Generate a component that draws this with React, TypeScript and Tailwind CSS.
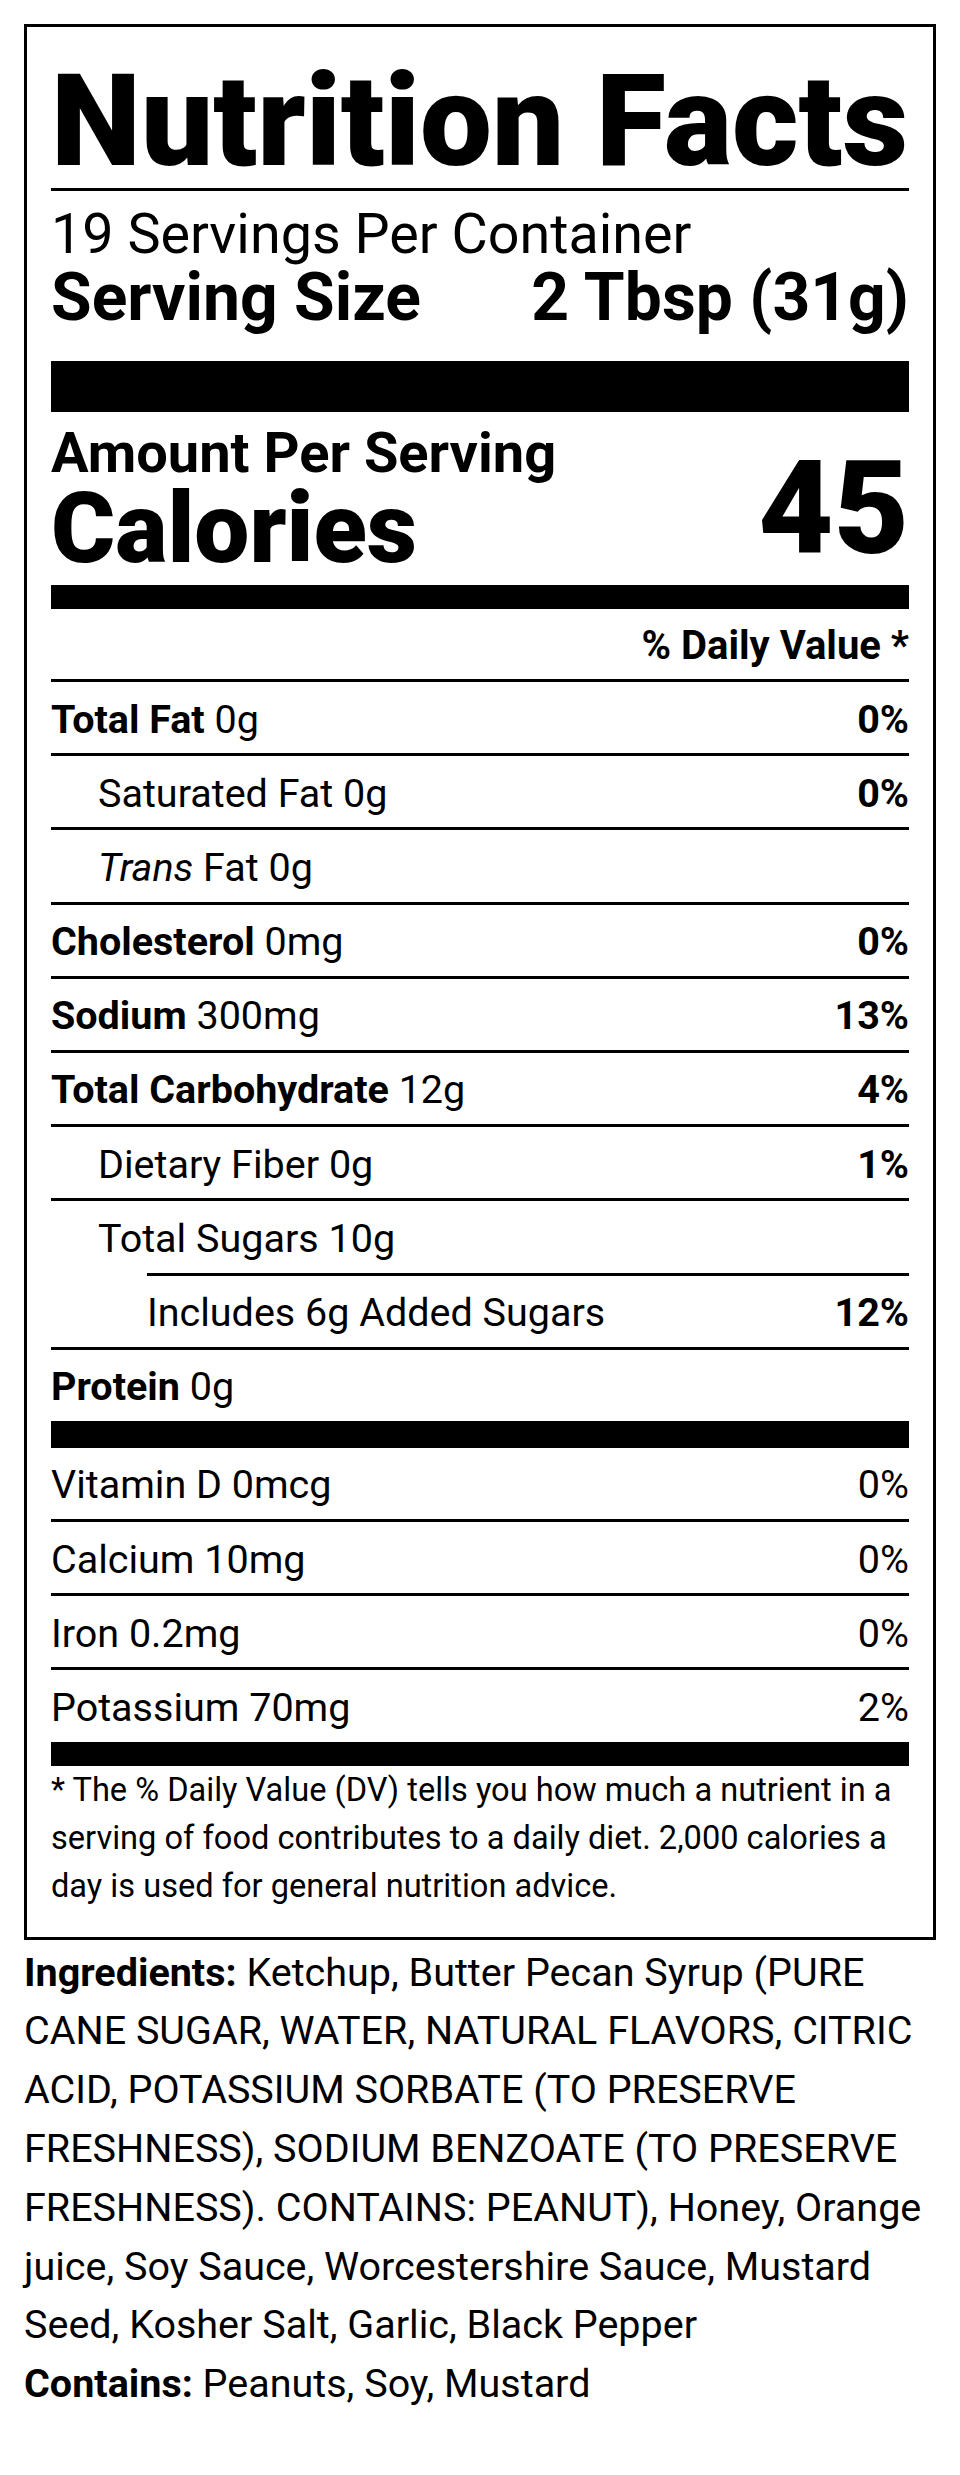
import React from 'react'

interface NutrientRow {
  name: string
  amount: string
  dv?: string
  bold?: boolean
  indent?: boolean
  italicPrefix?: string
}

const NUTRIENTS: NutrientRow[] = [
  { name: 'Total Fat', amount: '0g', dv: '0%', bold: true },
  { name: 'Saturated Fat', amount: '0g', dv: '0%', indent: true },
  { name: 'Fat', amount: '0g', indent: true, italicPrefix: 'Trans' },
  { name: 'Cholesterol', amount: '0mg', dv: '0%', bold: true },
  { name: 'Sodium', amount: '300mg', dv: '13%', bold: true },
  { name: 'Total Carbohydrate', amount: '12g', dv: '4%', bold: true },
  { name: 'Dietary Fiber', amount: '0g', dv: '1%', indent: true },
  { name: 'Total Sugars', amount: '10g', indent: true },
]

const VITAMINS = [
  { name: 'Vitamin D', amount: '0mcg', dv: '0%' },
  { name: 'Calcium', amount: '10mg', dv: '0%' },
  { name: 'Iron', amount: '0.2mg', dv: '0%' },
  { name: 'Potassium', amount: '70mg', dv: '2%' },
]

const rowText = 'text-[39.5px] leading-[44px] pt-[15.5px] pb-[11.7px]'

function Row({ row }: { row: NutrientRow }) {
  return (
    <div className={`flex justify-between border-t-[3px] border-black ${rowText}`}>
      <span className={row.indent ? 'pl-[47px]' : ''}>
        {row.italicPrefix && <i>{row.italicPrefix} </i>}
        {row.bold ? <b className="font-bold">{row.name}</b> : row.name} {row.amount}
      </span>
      {row.dv && <span className="font-bold">{row.dv}</span>}
    </div>
  )
}

export default function App() {
  return (
    <div className="min-h-screen bg-white px-6 pt-6 text-black font-['Roboto','Liberation_Sans',sans-serif]">
      {/* 标签 */}
      <div className="border-[3px] border-black px-6 pt-[30px] pb-[26px]">
        <h1 className="text-[128px] font-black leading-[128px]">Nutrition Facts</h1>
        <div className="mt-[3px] border-t-[3px] border-black" />
        <p className="mt-[12px] text-[55.7px] leading-[63px]">19 Servings Per Container</p>
        <div className="flex justify-between text-[66px] font-bold leading-[63px]">
          <span>Serving Size</span>
          <span>2 Tbsp (31g)</span>
        </div>
        <div className="mt-[32px] h-[51px] bg-black" />

        <div className="mt-[13.5px] flex items-end justify-between">
          <div>
            <div className="text-[56px] font-bold leading-[54px]">Amount Per Serving</div>
            <div className="text-[98px] font-black leading-[98px]">Calories</div>
          </div>
          <div className="mb-[4.5px] text-[130px] font-black leading-[128px]">45</div>
        </div>
        <div className="mt-[7.5px] h-[24px] bg-black" />

        <div className="mt-[15px] text-right text-[40px] font-bold leading-[44px]">% Daily Value *</div>

        <div className="mt-[11px]">
          {NUTRIENTS.map(r => (
            <Row key={r.name + r.amount} row={r} />
          ))}
          <div className={`ml-[96px] flex justify-between border-t-[3px] border-black ${rowText}`}>
            <span>Includes 6g Added Sugars</span>
            <span className="font-bold">12%</span>
          </div>
          <div className={`border-t-[3px] border-black ${rowText}`}>
            <b className="font-bold">Protein</b> 0g
          </div>
        </div>
        <div className="h-[27px] bg-black" />

        {VITAMINS.map((v, i) => (
          <div
            key={v.name}
            className={`flex justify-between border-black ${i > 0 ? 'border-t-[3px]' : ''} ${rowText}`}
          >
            <span>{v.name} {v.amount}</span>
            <span>{v.dv}</span>
          </div>
        ))}
        <div className="h-[24px] bg-black" />

        <p className="text-[32.6px] leading-[48.3px]">
          * The % Daily Value (DV) tells you how much a nutrient in a serving of food contributes to a daily diet. 2,000 calories a day is used for general nutrition advice.
        </p>
      </div>

      {/* 配料 */}
      <div className="mt-[4px] text-[39.5px] leading-[58.8px]">
        <p>
          <b className="font-bold">Ingredients:</b> Ketchup, Butter Pecan Syrup (PURE CANE SUGAR, WATER, NATURAL FLAVORS, CITRIC ACID, POTASSIUM SORBATE (TO PRESERVE FRESHNESS), SODIUM BENZOATE (TO PRESERVE FRESHNESS). CONTAINS: PEANUT), Honey, Orange juice, Soy Sauce, Worcestershire Sauce, Mustard Seed, Kosher Salt, Garlic, Black Pepper
        </p>
        <p>
          <b className="font-bold">Contains:</b> Peanuts, Soy, Mustard
        </p>
      </div>
    </div>
  )
}
